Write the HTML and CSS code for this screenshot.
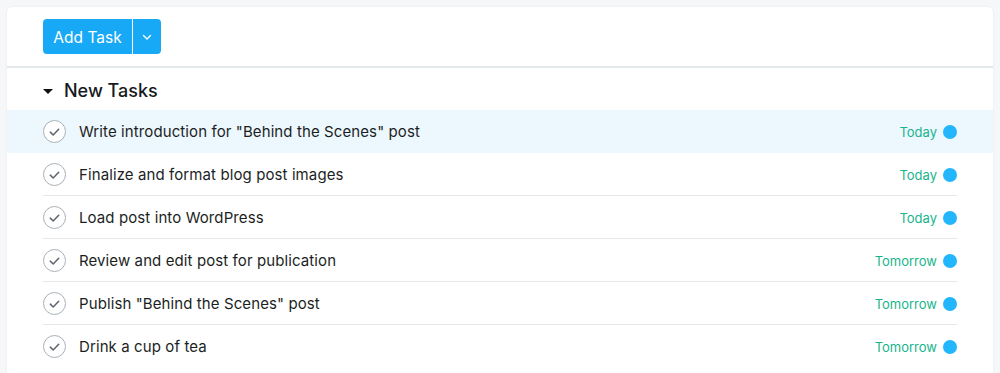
FILE: index.html
```html
<!DOCTYPE html>
<html lang="en">

<head>
    <meta charset="UTF-8" />
    <title>Tasks</title>
    <link rel="stylesheet" href="styles.css">
</head>

<body>
    <div class="task-card">
        <div class="card-header">
            <div class="split-button">
                <button class="btn-main">Add Task</button>
                <button class="btn-caret" title="More options">
                    <svg viewBox="0 0 12 12">
                        <path d="M2.5 4.5 6 8 9.5 4.5" />
                    </svg>
                </button>
            </div>
        </div>

        <div class="section-title">
            <span class="caret-down"></span>
            <span>New Tasks</span>
        </div>

        <ul class="task-list">
            <li class="task-row active">
                <div class="task-inner">
                    <span class="check"><svg viewBox="0 0 24 24"><path d="M7.2 12.2 10.5 15.4 16.8 8.9" /></svg></span>
                    <span class="task-name">Write introduction for "Behind the Scenes" post</span>
                    <span class="due">Today</span>
                    <span class="dot"></span>
                </div>
            </li>
            <li class="task-row">
                <div class="task-inner">
                    <span class="check"><svg viewBox="0 0 24 24"><path d="M7.2 12.2 10.5 15.4 16.8 8.9" /></svg></span>
                    <span class="task-name">Finalize and format blog post images</span>
                    <span class="due">Today</span>
                    <span class="dot"></span>
                </div>
            </li>
            <li class="task-row">
                <div class="task-inner">
                    <span class="check"><svg viewBox="0 0 24 24"><path d="M7.2 12.2 10.5 15.4 16.8 8.9" /></svg></span>
                    <span class="task-name">Load post into WordPress</span>
                    <span class="due">Today</span>
                    <span class="dot"></span>
                </div>
            </li>
            <li class="task-row">
                <div class="task-inner">
                    <span class="check"><svg viewBox="0 0 24 24"><path d="M7.2 12.2 10.5 15.4 16.8 8.9" /></svg></span>
                    <span class="task-name">Review and edit post for publication</span>
                    <span class="due">Tomorrow</span>
                    <span class="dot"></span>
                </div>
            </li>
            <li class="task-row">
                <div class="task-inner">
                    <span class="check"><svg viewBox="0 0 24 24"><path d="M7.2 12.2 10.5 15.4 16.8 8.9" /></svg></span>
                    <span class="task-name">Publish "Behind the Scenes" post</span>
                    <span class="due">Tomorrow</span>
                    <span class="dot"></span>
                </div>
            </li>
            <li class="task-row">
                <div class="task-inner">
                    <span class="check"><svg viewBox="0 0 24 24"><path d="M7.2 12.2 10.5 15.4 16.8 8.9" /></svg></span>
                    <span class="task-name">Drink a cup of tea</span>
                    <span class="due">Tomorrow</span>
                    <span class="dot"></span>
                </div>
            </li>
        </ul>
    </div>
</body>

</html>
```

FILE: styles.css
```css
body {
    background-color: #f6f7f9;
    font-family: Inter, "Noto Sans", Arial, sans-serif;
    margin: 0;
    padding: 7px 7px 0 7px;
    color: #1b1f24;
}

.task-card {
    background-color: #fff;
    border-radius: 5px 5px 0 0;
    box-shadow: 0 0 2px rgba(0, 0, 0, 0.08);
    min-height: 380px;
}

.card-header {
    padding: 12px 36px;
    border-bottom: 2px solid #e3e9eb;
}

.split-button {
    display: flex;
    gap: 1px;
    width: max-content;
}

.split-button button {
    border: none;
    background-color: #18a9f6;
    color: #fff;
    height: 35px;
    font-family: inherit;
    cursor: pointer;
}

.btn-main {
    width: 89px;
    font-size: 15.5px;
    font-weight: 400;
    border-radius: 4px 0 0 4px;
    padding: 1px 0 0 0;
}

.btn-caret {
    width: 28px;
    border-radius: 0 4px 4px 0;
    padding: 0;
    display: flex;
    align-items: center;
    justify-content: center;
}

.btn-caret svg {
    width: 12px;
    height: 12px;
    fill: none;
    stroke: #fff;
    stroke-width: 1.4;
    stroke-linecap: round;
    stroke-linejoin: round;
}

.section-title {
    height: 39px;
    padding: 3px 0 0 36px;
    display: flex;
    align-items: center;
    font-size: 18px;
    font-weight: 500;
    color: #151a21;
}

.caret-down {
    width: 0;
    height: 0;
    border-left: 5px solid transparent;
    border-right: 5px solid transparent;
    border-top: 5px solid #111;
    margin: 1px 11px 0 0;
}

.task-list {
    list-style: none;
    margin: 0;
    padding: 0;
}

.task-row {
    padding: 0 36px;
}

.task-row.active {
    background-color: #edf7fe;
}

.task-inner {
    height: 41px;
    padding-top: 1px;
    display: flex;
    align-items: center;
    border-bottom: 1px solid #e3e8ea;
}

.task-row.active .task-inner,
.task-row:last-child .task-inner {
    border-bottom-color: transparent;
}

.check {
    width: 23px;
    height: 23px;
    box-sizing: border-box;
    border: 1px solid #a9b1b8;
    border-radius: 50%;
    background: #fff;
    display: flex;
    align-items: center;
    justify-content: center;
    margin-right: 13px;
}

.check svg {
    width: 22px;
    height: 22px;
    fill: none;
    stroke: #5f6871;
    stroke-width: 1.8;
    stroke-linecap: round;
    stroke-linejoin: round;
}

.task-name {
    flex: 1;
    font-size: 15px;
    letter-spacing: 0.1px;
}

.due {
    font-size: 13px;
    color: #17b58c;
    margin-right: 6px;
}

.dot {
    width: 14px;
    height: 14px;
    border-radius: 50%;
    background-color: #24b6fc;
}
```
